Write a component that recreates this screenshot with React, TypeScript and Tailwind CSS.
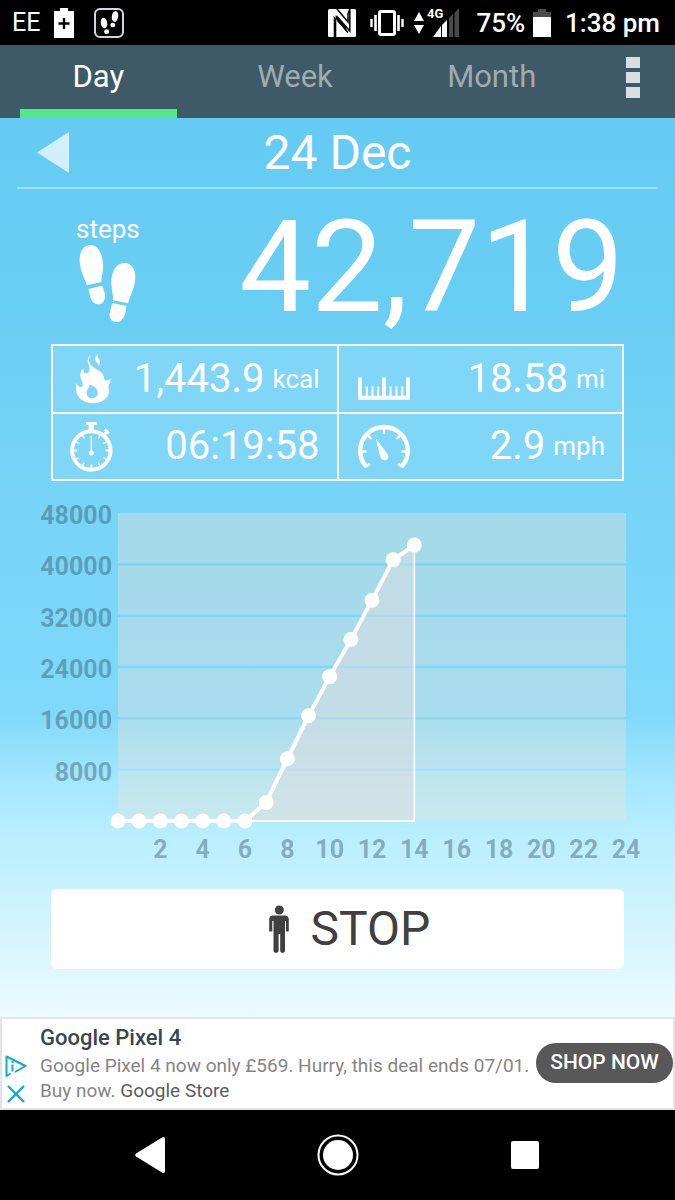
import type { ReactNode } from "react";

const hourlySteps = [
  0, 0, 0, 0, 0, 0, 0, 2900, 9700, 16400, 22500, 28300, 34400, 40700, 43000,
];

const tabs = ["Day", "Week", "Month"];

function Footprints({ className }: { className?: string }) {
  return (
    <svg viewBox="0 0 57 79" fill="currentColor" className={className} aria-hidden="true">
      <path d="M11 1C3 2 .4 9 .6 17C1 26 5 33 8 41.3L22.3 38C22.5 32 24.2 29 24 21C23.500 9 18.500 .5 11 1Z" />
      <path d="M9.300 45L23 41.700C24.500 45 26.300 49 26 53C25.600 57.500 23 60.300 19.500 60.300C15 60.300 12.500 57 11.500 53.500Z" />
      <path d="M46 19C38 19 32.500 26 32.300 38C32.200 46 34.500 50 34 56.300L49 59.300C51.500 51 56 43 56.300 34C56.600 26 53 19.300 46 19Z" />
      <path d="M33.300 59L47.300 62C47 66 46.500 70 44.600 73.300C43 76.500 40.500 78.200 37 78C32.500 77.600 30.300 74.500 30.600 70.500C30.900 66 32.500 63 33.300 59Z" />
    </svg>
  );
}

function FlameIcon() {
  return (
    <svg viewBox="1 0 56 52" fill="currentColor" className="h-[52px] w-14" aria-hidden="true">
      <path
        fillRule="evenodd"
        d="M22.500 2C19.500 7 21.500 11 25 14C30 18 35.500 18.500 36 25C36.200 27 37 28 38 27.500C40 27.200 41.500 26.500 43 25.500C42.500 29 40.500 31 40.500 34C40.500 36 41.500 37 41 40C39.500 46.500 32 50.500 24.500 50.300C15 50 8.500 44 8 37C7.800 34.500 8.500 32.500 8.200 30C9.500 32 10.500 33.800 12.500 34C14.500 34 15.200 32.500 14.800 30.500C14.300 28 12.300 26 12.300 22C12.300 19 13.500 17 15.500 16C15.300 18.500 16.200 20.500 18 20.500C20.500 20.500 22 18 21.500 15.500C21 12 19.300 10 19.800 7C20.300 4.500 21 3 22.500 2ZM21.500 31.500C22.500 34 18.800 35.500 18.600 39.500C18.500 43 21 45.300 24.300 45.300C27.500 45.300 30 43 29.800 39.600C29.700 36.500 27 33.200 21.500 31.500Z"
      />
      <path d="M30.500 1C26.500 4 26 6.500 28.500 9C29.700 10.300 30.500 11.300 30.600 13C33.500 9.500 31.500 7 30.200 5C29.400 3.700 29.700 2.300 30.500 1Z" />
    </svg>
  );
}

function StopwatchIcon() {
  return (
    <svg viewBox="1 0 56 52" stroke="currentColor" fill="none" className="h-[52px] w-14" aria-hidden="true">
      <circle cx="23.300" cy="30.500" r="19.200" strokeWidth="4" />
      <path d="M18 3.500H28.700M20.800 7.500H25.800" strokeWidth="3.200" />
      <path d="M23.300 4V12" strokeWidth="5" />
      <path d="M36 15L39.200 11.500" strokeWidth="3" />
      <path d="M36.800 9.200L41 13.200" strokeWidth="2.600" />
      <path d="M23.300 16V32" strokeWidth="1.500" />
      <circle cx="23.300" cy="33" r="2.500" fill="currentColor" stroke="none" />
      {[30, 60, 90, 120, 150, 180, 210, 240, 270, 300, 330].map((deg) => (
        <path
          key={deg}
          d="M23.300 13V16.500"
          strokeWidth={deg % 90 === 0 ? 2 : 1.4}
          transform={`rotate(${deg} 23.3 30.5)`}
        />
      ))}
    </svg>
  );
}

function RulerIcon() {
  return (
    <svg viewBox="0 0 56 52" stroke="currentColor" fill="none" className="h-[52px] w-14" aria-hidden="true">
      <path d="M5 24.500V44.700H53V24.500" strokeWidth="4" />
      <path d="M29 24.500V44" strokeWidth="4" />
      <path d="M11.800 33.500V44M17.500 33.500V44M23.200 33.500V44M35.600 33.500V44M41.500 33.500V44M47.300 33.500V44" strokeWidth="2" />
    </svg>
  );
}

function GaugeIcon() {
  return (
    <svg viewBox="1 0 56 52" stroke="currentColor" fill="none" className="h-[52px] w-14" aria-hidden="true">
      <path d="M12.400 46.800A23.800 23.800 0 1 1 47.600 46.800" strokeWidth="4.400" />
      <path d="M11 47L16 43.800M49 47L44 43.800" strokeWidth="2.400" />
      <path d="M8 31.500H12.500M52 31.500H47.500M30 9V14M14.300 15.800L17.500 19M45.700 15.800L42.500 19" strokeWidth="2.400" />
      <path
        d="M21.800 18.500L33.500 34C35.500 37 33.800 40.300 31 40.300C28.500 40.300 27 38.800 26.200 36.500Z"
        fill="currentColor"
        stroke="none"
      />
    </svg>
  );
}

function PersonIcon() {
  return (
    <svg viewBox="0 0 20 49" fill="currentColor" className="h-[49px] w-5" aria-hidden="true">
      <circle cx="10.300" cy="5" r="4.500" />
      <path d="M4 10.500H16C18.500 10.500 19.800 12 19.800 14.500V26.500H17V16H16V46C16 48.400 11.200 48.400 11.200 46V29H9.600V46C9.600 48.400 4.500 48.400 4.500 46V16H3.300V26.500H.2V14.500C.2 12 1.500 10.500 4 10.500Z" />
    </svg>
  );
}

function StatusBar() {
  return (
    <header className="flex h-[45px] items-center bg-black pr-[15px] pl-3 text-[26px] leading-none">
      <span className="text-[25px]">EE</span>
      <svg viewBox="0 0 20 30" className="ml-[14px] h-[30px] w-5" aria-hidden="true">
        <path d="M6 0H14V3H20V30H0V3H6Z" fill="#fff" />
        <path d="M10 10V21M4.500 15.500H15.500" stroke="#000" strokeWidth="2.400" />
      </svg>
      <span className="ml-5 flex h-[30px] w-[30px] items-center justify-center rounded-md border-2 border-gray-300">
        <svg viewBox="0 0 24 26" fill="#fff" className="h-[26px] w-6" aria-hidden="true">
          <ellipse cx="7" cy="13" rx="3.200" ry="5.400" transform="rotate(-10 7 13)" />
          <ellipse cx="9.600" cy="21.700" rx="2.500" ry="2.400" />
          <ellipse cx="18" cy="6.500" rx="3.200" ry="5.400" transform="rotate(10 18 6.500)" />
          <ellipse cx="15.800" cy="15" rx="2.500" ry="2.300" />
        </svg>
      </span>

      <div className="ml-auto flex items-center font-medium">
        <svg viewBox="0 0 30 30" className="h-[30px] w-[30px]" aria-hidden="true">
          <rect x="1" y="1" width="28" height="28" rx="1.500" fill="#fff" />
          <path d="M7 29V8.500L19 22.500V19L9 7.500V29Z" fill="#000" stroke="#000" strokeWidth=".6" />
          <path d="M10 1L21 14V6L22.800 1V23L11 9.500V13L21 24.500" fill="none" stroke="#000" strokeWidth="1.500" />
        </svg>
        <svg viewBox="0 0 34 26" fill="none" stroke="#fff" className="ml-[13px] h-[26px] w-[34px]" aria-hidden="true">
          <rect x="9.500" y="1.500" width="15" height="23" rx="1.500" strokeWidth="3" />
          <path d="M5.500 5V21M28.500 5V21" strokeWidth="2.600" />
          <path d="M1.500 9V17M32.500 9V17" strokeWidth="2.400" />
        </svg>
        <svg viewBox="0 -5 46 40" fill="#fff" className="ml-[10px] h-10 w-[46px]" aria-hidden="true">
          <path d="M0 13L5 4L10 13ZM0 17H10L5 26Z" />
          <path d="M28 17V29H33V12Z" />
          <path d="M19 29L27 18V29Z" />
          <path d="M35 10L39 6V29H35ZM40.500 5L45 0V29H40.500Z" fill="#4a4a4a" />
          <text x="13" y="10" fontSize="13" fontWeight="700">4G</text>
        </svg>
        <span className="ml-4">75%</span>
        <svg viewBox="0 0 18 28" className="ml-2 h-7 w-[18px]" aria-hidden="true">
          <path d="M5 0H13V3H18V9H0V3H5Z" fill="#4a4a4a" />
          <path d="M0 8H18V28H0Z" fill="#fff" />
        </svg>
        <span className="ml-[14px]">1:38 pm</span>
      </div>
    </header>
  );
}

function TabBar() {
  return (
    <nav className="flex h-[73px] bg-[#3d5a66]">
      <div className="flex flex-1" role="tablist">
        {tabs.map((tab, i) => (
          <button
            key={tab}
            role="tab"
            aria-selected={i === 0}
            className={
              i === 0
                ? "flex flex-1 flex-col px-5 text-[31px] text-white"
                : "flex flex-1 flex-col px-5 text-[31px] text-[#9eacb2]"
            }
          >
            <span className="w-full flex-1 text-center leading-[64px]">{tab}</span>
            {i === 0 && <span className="h-[13px] w-full bg-[#52e88b]" />}
          </button>
        ))}
      </div>
      <button
        aria-label="More options"
        className="flex w-[85px] flex-col items-center gap-1 pt-3"
      >
        <span className="h-[11px] w-[14px] bg-[#d8dee1]" />
        <span className="h-[11px] w-[14px] bg-[#d8dee1]" />
        <span className="h-[11px] w-[14px] bg-[#d8dee1]" />
      </button>
    </nav>
  );
}

interface StatProps {
  icon: ReactNode;
  value: string;
  unit?: string;
}

function Stat({ icon, value, unit }: StatProps) {
  return (
    <div className="flex items-center justify-between pr-[17px] pl-4">
      {icon}
      <p className="flex items-center gap-2 leading-none">
        <span className="text-[40px]">{value}</span>
        {unit && <span className="text-[26px]">{unit}</span>}
      </p>
    </div>
  );
}

function StepsChart() {
  const left = 118;
  const width = 508;
  const top = 32;
  const height = 308;
  const bottom = top + height;

  const points = hourlySteps.map((steps, hour) => ({
    x: left + (hour * width) / 24,
    y: bottom - (steps / 48000) * height,
  }));
  const last = points[points.length - 1];
  const line = points.map((p) => `${p.x},${p.y}`).join(" ");

  return (
    <svg viewBox="0 0 675 408" className="w-full" role="img" aria-label="Steps per hour">
      {[0, 1, 2, 3, 4, 5].map((i) => {
        const y = top + (i * height) / 6;
        return (
          <g key={i}>
            <rect
              x={left}
              y={i === 0 ? y : y + 1.2}
              width={width}
              height={i === 0 ? height / 6 - 1.2 : height / 6 - 2.4}
              fill="#ece1d6"
              fillOpacity="0.38"
            />
            <text
              x="112"
              y={y + 11}
              textAnchor="end"
              fontSize="25"
              fontWeight="700"
              fill="#2f505d"
              fillOpacity="0.42"
            >
              {48000 - i * 8000}
            </text>
          </g>
        );
      })}

      <polygon
        points={`${line} ${last.x},${bottom}`}
        fill="#dbdee0"
        fillOpacity="0.5"
      />
      <path
        d={`M${left} ${bottom}H${last.x}V${last.y}`}
        fill="none"
        stroke="#fff"
        strokeWidth="1.600"
      />
      <polyline points={line} fill="none" stroke="#fff" strokeWidth="4" />
      {points.map((p) => (
        <circle key={p.x} cx={p.x} cy={p.y} r="7.500" fill="#fff" />
      ))}

      {[2, 4, 6, 8, 10, 12, 14, 16, 18, 20, 22, 24].map((hour) => (
        <text
          key={hour}
          x={left + (hour * width) / 24}
          y="377"
          textAnchor="middle"
          fontSize="25"
          fontWeight="700"
          fill="#2f505d"
          fillOpacity="0.42"
        >
          {hour}
        </text>
      ))}
    </svg>
  );
}

function AdBanner() {
  return (
    <aside className="flex border-2 border-[#e2e4e6] bg-white pt-1 pb-[5px] text-[19px] leading-[25px] text-[#858585]">
      <div className="flex w-[38px] flex-col gap-2 pt-8 pl-[3px]">
        <a href="#ad-choices" aria-label="Ad choices">
          <svg viewBox="0 0 22 22" fill="none" stroke="#12abc9" className="h-[22px] w-[22px]">
            <path d="M5.500 18.500L1.500 21V1.500L20.500 11L10 17" strokeWidth="2" strokeLinejoin="round" />
            <path d="M7.500 9.500V16.500M7.500 6V8" strokeWidth="2" />
          </svg>
        </a>
        <button aria-label="Close ad" className="w-[22px]">
          <svg viewBox="0 0 22 18" fill="none" stroke="#12abc9" className="h-[18px] w-[22px]">
            <path d="M3 1L19 17M19 1L3 17" strokeWidth="2.400" />
          </svg>
        </button>
      </div>
      <div className="min-w-0 flex-1">
        <h2 className="text-[22px] leading-[30px] font-medium text-[#37474f]">
          Google Pixel 4
        </h2>
        <p>
          Google Pixel 4 now only £569. Hurry, this deal ends 07/01.
          <br />
          Buy now.{" "}
          <a href="#google-store" className="text-[#5c5c5c]">
            Google Store
          </a>
        </p>
      </div>
      <a
        href="#shop"
        className="mt-5 flex h-10 w-[137px] items-center justify-center rounded-full bg-[#585858] pb-0.5 text-[21px] font-medium text-white"
      >
        SHOP NOW
      </a>
    </aside>
  );
}

function NavigationBar() {
  return (
    <footer className="flex h-[90px] bg-black px-14">
      <button aria-label="Back" className="flex flex-1 items-center justify-center">
        <svg viewBox="0 0 30 36" fill="#fff" className="h-9 w-[30px]">
          <path d="M27 .5Q30 -1 30 2V34Q30 37 27 35.500L1 19.500Q-.5 18 1 16.500Z" />
        </svg>
      </button>
      <button aria-label="Home" className="flex flex-1 items-center justify-center">
        <svg viewBox="0 0 42 42" fill="#fff" className="h-[42px] w-[42px]">
          <circle cx="21" cy="21" r="19.500" fill="none" stroke="#fff" strokeWidth="2" />
          <circle cx="21" cy="21" r="15" />
        </svg>
      </button>
      <button aria-label="Recent apps" className="flex flex-1 items-center justify-center">
        <span className="h-7 w-7 rounded-xs bg-white" />
      </button>
    </footer>
  );
}

export default function App() {
  return (
    <div className="flex min-h-screen flex-col font-[Roboto,sans-serif] text-white">
      <StatusBar />
      <TabBar />

      <main className="flex flex-1 flex-col bg-[linear-gradient(to_bottom,#66cbf2_0%,#69cef4_20%,#77d4f7_43%,#80d9fb_66%,#a5e7fe_74%,#baeeff_80%,#ccf2ff_87%,#ecfbff_100%)]">
        <div className="mx-[17px] grid h-[71px] grid-cols-[60px_1fr_60px] items-center border-b-2 border-white/35">
          <button aria-label="Previous day" className="pl-5">
            <svg viewBox="0 0 32 41" className="h-[41px] w-8 fill-white/70">
              <path d="M32 0V41L0 20.500Z" />
            </svg>
          </button>
          <h1 className="text-center text-[48px] leading-none">24 Dec</h1>
        </div>

        <div className="flex h-[155px] items-center justify-between pr-[51px] pl-[76px]">
          <div className="flex flex-col items-center pt-1">
            <span className="text-[26px] leading-[30px]">steps</span>
            <Footprints className="h-[79px] w-[57px]" />
          </div>
          <p className="text-[128px] leading-none">42,719</p>
        </div>

        <section className="mx-[51px] grid h-[137px] grid-cols-2 grid-rows-2 gap-0.5 border-2 border-white bg-white">
          <div className="contents *:bg-[#7fd6f7]">
            <Stat icon={<FlameIcon />} value="1,443.9" unit="kcal" />
            <Stat icon={<RulerIcon />} value="18.58" unit="mi" />
            <Stat icon={<StopwatchIcon />} value="06:19:58" />
            <Stat icon={<GaugeIcon />} value="2.9" unit="mph" />
          </div>
        </section>

        <StepsChart />

        <button className="mx-[51px] mb-12 flex h-20 items-center justify-center gap-[22px] rounded-md bg-white pl-6 text-[48px] leading-none text-[#404040]">
          <PersonIcon />
          STOP
        </button>
      </main>

      <AdBanner />
      <NavigationBar />
    </div>
  );
}
